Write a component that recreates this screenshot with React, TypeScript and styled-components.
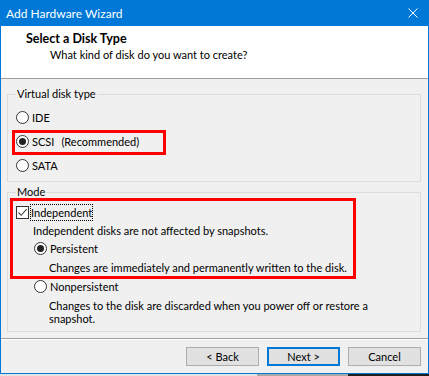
import React from "react";
import styled, { createGlobalStyle } from "styled-components";

const GlobalStyle = createGlobalStyle`
  html, body {
    margin: 0;
    padding: 0;
    background: #f0f0f0;
  }
  body {
    font-family: "Lato", "Noto Sans", sans-serif;
  }
  * {
    box-sizing: border-box;
  }
`;

const Screen = styled.div`
  width: 429px;
  height: 376px;
  display: flex;
  flex-direction: column;
  overflow: hidden;
`;

const Window = styled.div`
  height: 374px;
  flex-shrink: 0;
  display: flex;
  flex-direction: column;
  border: 1px solid #0078d7;
  border-top: none;
  background: #f0f0f0;
  color: #000;
  font-size: 11px;
  line-height: 13px;
`;

const TitleBar = styled.div`
  height: 26px;
  flex-shrink: 0;
  display: flex;
  align-items: center;
  justify-content: space-between;
  padding: 0 10px 0 5px;
  background: #0078d7;
  color: #fff;
  font-size: 12px;
`;

const Header = styled.div`
  height: 53px;
  flex-shrink: 0;
  display: flex;
  flex-direction: column;
  padding: 6px 0 0 25px;
  background: #fff;
  border-bottom: 1px solid #a0a0a0;
`;

const HeaderTitle = styled.div`
  font-weight: bold;
  font-size: 12.5px;
  line-height: 14px;
`;

const HeaderSub = styled.div`
  margin: 2px 0 0 24px;
`;

const Body = styled.div`
  flex: 1;
  min-height: 0;
  display: flex;
  flex-direction: column;
  padding: 9px 7px 6px 6px;
`;

const Group = styled.fieldset<{ $gapTop?: number; $padTop?: number; $padBottom: number }>`
  margin: ${(p) => p.$gapTop ?? 0}px 0 0 0;
  padding: ${(p) => p.$padTop ?? 0}px 0 ${(p) => p.$padBottom}px 0;
  min-width: 0;
  border: 1px solid #dcdcdc;
  display: flex;
  flex-direction: column;
`;

const Legend = styled.legend`
  margin-left: 8px;
  padding: 0 1px;
  line-height: 12px;
`;

const Row = styled.div<{ $h: number; $left: number; $top?: number; $gap?: number }>`
  height: ${(p) => p.$h}px;
  margin: ${(p) => p.$top ?? 0}px 0 0 ${(p) => p.$left}px;
  display: flex;
  align-items: center;
  gap: ${(p) => p.$gap ?? 3}px;
  white-space: nowrap;
`;

const Highlight = styled.div<{ $w: number; $left: number }>`
  width: ${(p) => p.$w}px;
  margin-left: ${(p) => p.$left}px;
  border: 3px solid #f00;
  display: flex;
  flex-direction: column;
`;

const ScsiBox = styled(Highlight)`
  height: 25px;
  margin-top: 1px;
  margin-bottom: -2px;
  padding: 0 0 2px 1px;
  flex-direction: row;
  align-items: center;
  gap: 3px;
  white-space: nowrap;
`;

const Note = styled.div<{ $left: number; $top: number; $bottom?: number; $w?: number }>`
  margin: ${(p) => p.$top}px 0 ${(p) => p.$bottom ?? 0}px ${(p) => p.$left}px;
  width: ${(p) => (p.$w ? `${p.$w}px` : "auto")};
  white-space: ${(p) => (p.$w ? "normal" : "nowrap")};
`;

const Radio = styled.span<{ $on?: boolean }>`
  width: 13px;
  height: 13px;
  flex-shrink: 0;
  border: 1px solid #333;
  border-radius: 50%;
  background: #fff;
  display: flex;
  align-items: center;
  justify-content: center;
  &::after {
    content: "";
    width: 7px;
    height: 7px;
    border-radius: 50%;
    background: ${(p) => (p.$on ? "#222" : "transparent")};
  }
`;

const Check = styled.span`
  width: 13px;
  height: 13px;
  flex-shrink: 0;
  border: 1px solid #333;
  background: #fff;
  display: flex;
  align-items: center;
  justify-content: center;
`;

const FocusText = styled.span`
  border: 1px dotted #000;
  padding: 1px 0;
  margin-left: -1px;
`;

const Aside = styled.span`
  margin-left: 7px;
`;

const Footer = styled.div`
  height: 35px;
  flex-shrink: 0;
  display: flex;
  justify-content: flex-end;
  align-items: flex-start;
  gap: 8px;
  padding: 8px 7px 0 0;
  border-top: 1px solid #a0a0a0;
  box-shadow: inset 0 1px 0 #fff;
`;

const Button = styled.button<{ $primary?: boolean }>`
  width: 73px;
  height: 19px;
  padding: 0;
  font: inherit;
  color: #000;
  background: #e1e1e1;
  border: 1px solid ${(p) => (p.$primary ? "#0078d7" : "#adadad")};
  box-shadow: ${(p) => (p.$primary ? "inset 0 0 0 1px #0078d7" : "none")};
`;

const Shadow = styled.div`
  height: 2px;
  flex-shrink: 0;
  display: flex;
`;

const ShadowPart = styled.div<{ $w?: number; $c: string }>`
  flex: ${(p) => (p.$w ? `0 0 ${p.$w}px` : "1")};
  background: ${(p) => p.$c};
`;

const App = () => {
  return (
    <Screen>
      <GlobalStyle />
      <Window>
        <TitleBar>
          <span>Add Hardware Wizard</span>
          <svg width="10" height="10" viewBox="0 0 10 10">
            <path d="M0.5 0.5 L9.5 9.5 M9.5 0.5 L0.5 9.5" stroke="#fff" strokeWidth="1" />
          </svg>
        </TitleBar>

        <Header>
          <HeaderTitle>Select a Disk Type</HeaderTitle>
          <HeaderSub>What kind of disk do you want to create?</HeaderSub>
        </Header>

        <Body>
          <Group $padTop={5} $padBottom={4}>
            <Legend>Virtual disk type</Legend>
            <Row $h={24} $left={8}>
              <Radio />
              IDE
            </Row>
            <ScsiBox $w={154} $left={4}>
              <Radio $on />
              <span>
                SCSI<Aside>(Recommended)</Aside>
              </span>
            </ScsiBox>
            <Row $h={24} $left={8}>
              <Radio />
              SATA
            </Row>
          </Group>

          <Group $gapTop={4} $padBottom={6}>
            <Legend>Mode</Legend>
            <Highlight $w={346} $left={2}>
              <Row $h={22} $left={3} $gap={2}>
                <Check>
                  <svg width="11" height="11" viewBox="0 0 11 11">
                    <path d="M1.5 5.5 L4.2 8.3 L9.7 2.2" fill="none" stroke="#444" strokeWidth="1.1" />
                  </svg>
                </Check>
                <FocusText>Independent</FocusText>
              </Row>
              <Note $left={20} $top={1}>
                Independent disks are not affected by snapshots.
              </Note>
              <Row $h={20} $left={21} $top={1}>
                <Radio $on />
                Persistent
              </Row>
              <Note $left={36} $top={3} $bottom={2}>
                Changes are immediately and permanently written to the disk.
              </Note>
            </Highlight>
            <Row $h={16} $left={26} $top={-1}>
              <Radio />
              Nonpersistent
            </Row>
            <Note $left={41} $top={5} $w={345}>
              Changes to the disk are discarded when you power off or restore a snapshot.
            </Note>
          </Group>
        </Body>

        <Footer>
          <Button>&lt; Back</Button>
          <Button $primary>Next &gt;</Button>
          <Button>Cancel</Button>
        </Footer>
      </Window>
      <Shadow>
        <ShadowPart $w={257} $c="#e4e4e4" />
        <ShadowPart $w={91} $c="#a8a8a8" />
        <ShadowPart $c="#1e1e1e" />
      </Shadow>
    </Screen>
  );
};

export default App;
